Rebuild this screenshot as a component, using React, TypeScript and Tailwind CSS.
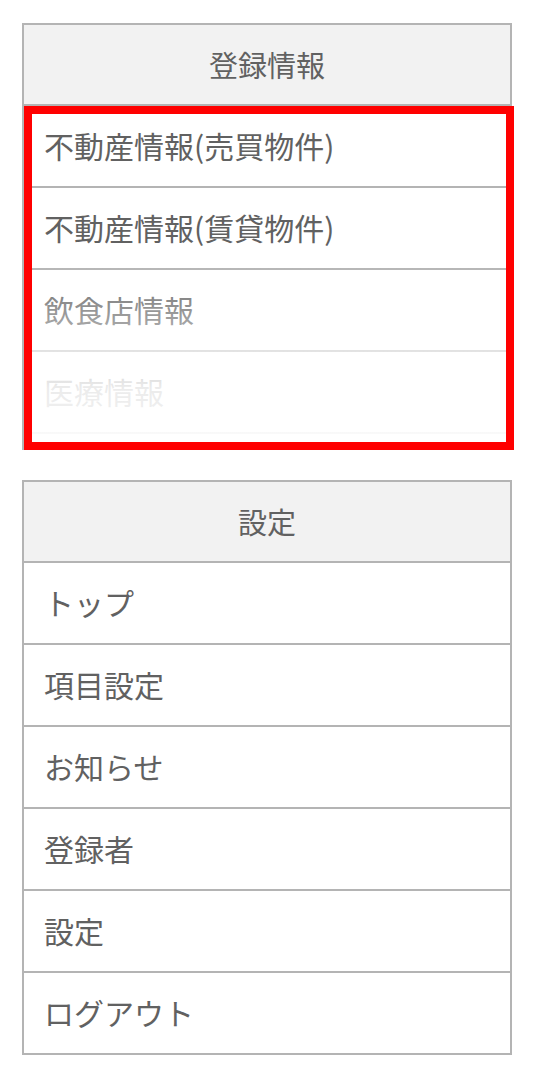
const registered = ["不動産情報(売買物件)", "不動産情報(賃貸物件)", "飲食店情報", "医療情報"];
const settings = ["トップ", "項目設定", "お知らせ", "登録者", "設定", "ログアウト"];

const font = { fontFamily: '"Noto Sans CJK JP", "Noto Sans", sans-serif' };

function Header({ title }: { title: string }) {
  return (
    <div className="flex h-[81px] items-center justify-center border-b-2 border-[#b4b4b4] bg-[#f2f2f2] text-[29px] text-[#616161]">
      {title}
    </div>
  );
}

function Row({ label }: { label: string }) {
  return (
    <div className="flex h-[82px] items-center border-b-2 border-[#b4b4b4] pb-[2px] pl-[20px] text-[30px] text-[#616161] last:h-[80px] last:border-b-0">
      {label}
    </div>
  );
}

export default function App() {
  return (
    <div className="min-h-screen bg-white pl-[22px] pt-[23px]" style={font}>
      <section className="relative w-[490px]">
        <div className="border-2 border-[#b4b4b4]">
          <Header title="登録情報" />
          <div className="relative h-[342px] overflow-hidden">
            {registered.map((item) => (
              <div key={item} className="flex h-[82px] items-center border-b-2 border-[#b4b4b4] pb-[2px] pl-[20px] text-[30px] text-[#616161]">
                {item}
              </div>
            ))}
            <div className="pointer-events-none absolute inset-0 bg-[linear-gradient(to_bottom,rgba(255,255,255,0)_157px,rgba(255,255,255,0.88)_282px,rgba(255,255,255,0.93)_342px)]" />
          </div>
        </div>
        <div className="pointer-events-none absolute left-[2px] top-[83px] h-[344px] w-[490px] border-8 border-[#ff0000]" />
      </section>

      <section className="mt-[30px] w-[490px] border-2 border-[#b4b4b4]">
        <Header title="設定" />
        {settings.map((item) => (
          <Row key={item} label={item} />
        ))}
      </section>
    </div>
  );
}
